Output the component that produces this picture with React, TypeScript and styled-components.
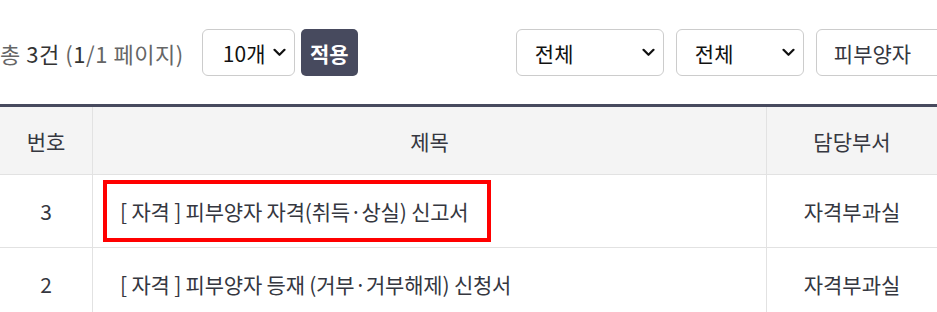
import React from 'react';
import styled, { createGlobalStyle } from 'styled-components';

const GlobalStyle = createGlobalStyle`
  html, body {
    margin: 0;
    padding: 0;
    background: #fff;
    overflow: hidden;
  }
  body {
    font-family: "Noto Sans CJK KR", "Noto Sans", sans-serif;
    color: #35373f;
  }
`;

const Page = styled.div`
  width: 937px;
  overflow: hidden;
`;

const Toolbar = styled.div`
  display: flex;
  align-items: center;
  padding-top: 29px;
  height: 47px;
`;

const LeftGroup = styled.div`
  display: flex;
  align-items: center;
  gap: 6px;
`;

const Summary = styled.p`
  margin: 0 12px 0 0;
  font-size: 22px;
  color: #666;
  white-space: nowrap;
  letter-spacing: 0.55px;
`;

const Strong = styled.span`
  color: #333;
`;

const RightGroup = styled.div`
  display: flex;
  align-items: center;
  gap: 12px;
  margin-left: 158px;
`;

const SelectBox = styled.div<{ $width: number; $padLeft: number }>`
  box-sizing: border-box;
  display: flex;
  align-items: center;
  justify-content: space-between;
  width: ${({ $width }) => $width}px;
  height: 47px;
  padding: 0 8px 0 ${({ $padLeft }) => $padLeft}px;
  border: 1px solid #ccc;
  border-radius: 6px;
  background: #fff;
  font-size: 21px;
  color: #111;
  flex-shrink: 0;
`;

const Chevron = () => (
  <svg width="13" height="9" viewBox="0 0 13 9" aria-hidden="true">
    <path d="M1.5 1.8 L6.5 6.8 L11.5 1.8" fill="none" stroke="#111" strokeWidth="2.2" strokeLinecap="round" strokeLinejoin="round" />
  </svg>
);

const ApplyButton = styled.button`
  box-sizing: border-box;
  width: 57px;
  height: 47px;
  border: none;
  border-radius: 5px;
  background: #474a5e;
  color: #fff;
  font-family: inherit;
  font-size: 21px;
  font-weight: 700;
  padding: 0;
`;

const SearchInput = styled.div`
  box-sizing: border-box;
  display: flex;
  align-items: center;
  width: 160px;
  height: 47px;
  padding-left: 17px;
  border: 1px solid #ccc;
  border-radius: 6px;
  font-size: 21px;
  color: #35373f;
  flex-shrink: 0;
`;

const Table = styled.table`
  width: 937px;
  margin-top: 28px;
  border-collapse: collapse;
  border-top: 3px solid #474a5e;
  table-layout: fixed;
`;

const HeadCell = styled.th<{ $width?: number }>`
  width: ${({ $width }) => ($width ? `${$width}px` : 'auto')};
  height: 67px;
  padding: 0;
  background: #f4f4f4;
  font-weight: 400;
  font-size: 21px;
  color: #35373f;
  text-align: center;
  border-bottom: 1px solid #e2e2e2;
  border-left: 1px solid #e2e2e2;
  &:first-child {
    border-left: none;
  }
`;

const Cell = styled.td<{ $align?: 'left' | 'center' }>`
  height: 72px;
  padding: ${({ $align }) => ($align === 'left' ? '0 0 0 10px' : '0')};
  font-size: 21px;
  color: #35373f;
  text-align: ${({ $align }) => $align || 'center'};
  border-bottom: 1px solid #e2e2e2;
  border-left: 1px solid #e2e2e2;
  &:first-child {
    border-left: none;
  }
`;

const TitleLink = styled.span<{ $marked?: boolean }>`
  display: inline-block;
  padding: 12px 18px 12px 13px;
  border: 4px solid ${({ $marked }) => ($marked ? '#ff0000' : 'transparent')};
  white-space: nowrap;
  letter-spacing: -0.2px;
`;

const rows = [
  { no: 3, title: '[ 자격 ] 피부양자 자격(취득·상실) 신고서', dept: '자격부과실', marked: true },
  { no: 2, title: '[ 자격 ] 피부양자 등재 (거부·거부해제) 신청서', dept: '자격부과실', marked: false },
];

export default function App() {
  return (
    <Page>
      <GlobalStyle />
      <Toolbar>
        <LeftGroup>
          <Summary>
            총 <Strong>3건</Strong> (<Strong>1</Strong>/1 페이지)
          </Summary>
          <SelectBox $width={93} $padLeft={20}>
            <span>10개</span>
            <Chevron />
          </SelectBox>
          <ApplyButton>적용</ApplyButton>
        </LeftGroup>
        <RightGroup>
          <SelectBox $width={148} $padLeft={18}>
            <span>전체</span>
            <Chevron />
          </SelectBox>
          <SelectBox $width={128} $padLeft={18}>
            <span>전체</span>
            <Chevron />
          </SelectBox>
          <SearchInput>피부양자</SearchInput>
        </RightGroup>
      </Toolbar>
      <Table>
        <thead>
          <tr>
            <HeadCell $width={92}>번호</HeadCell>
            <HeadCell>제목</HeadCell>
            <HeadCell $width={170}>담당부서</HeadCell>
          </tr>
        </thead>
        <tbody>
          {rows.map((r) => (
            <tr key={r.no}>
              <Cell>{r.no}</Cell>
              <Cell $align="left">
                <TitleLink $marked={r.marked}>{r.title}</TitleLink>
              </Cell>
              <Cell>{r.dept}</Cell>
            </tr>
          ))}
        </tbody>
      </Table>
    </Page>
  );
}
